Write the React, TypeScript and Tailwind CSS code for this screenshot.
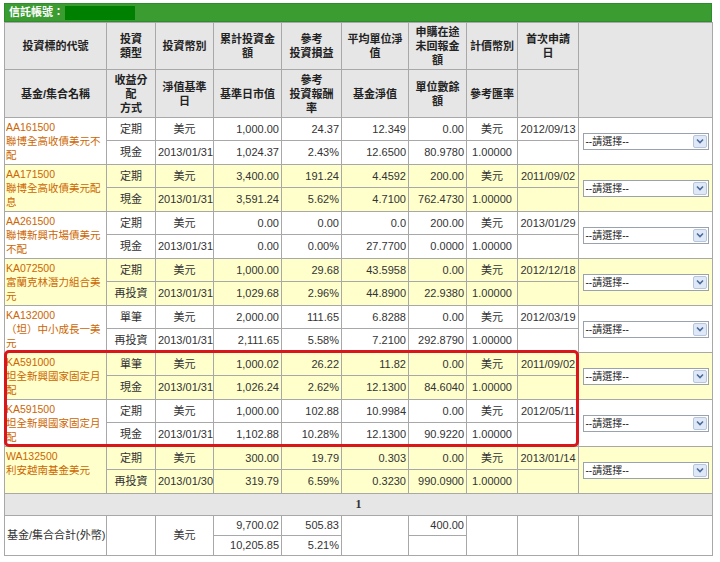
const funds = [
  { code: "AA161500", name: "聯博全高收債美元不配", y: false, a: ["定期", "美元", "1,000.00", "24.37", "12.349", "0.00", "美元", "2012/09/13"], b: ["現金", "2013/01/31", "1,024.37", "2.43%", "12.6500", "80.9780", "1.00000", ""] },
  { code: "AA171500", name: "聯博全高收債美元配息", y: true, a: ["定期", "美元", "3,400.00", "191.24", "4.4592", "200.00", "美元", "2011/09/02"], b: ["現金", "2013/01/31", "3,591.24", "5.62%", "4.7100", "762.4730", "1.00000", ""] },
  { code: "AA261500", name: "聯博新興市場債美元不配", y: false, a: ["定期", "美元", "0.00", "0.00", "0.0", "200.00", "美元", "2013/01/29"], b: ["現金", "2013/01/31", "0.00", "0.00%", "27.7700", "0.0000", "1.00000", ""] },
  { code: "KA072500", name: "富蘭克林潛力組合美元", y: true, a: ["定期", "美元", "1,000.00", "29.68", "43.5958", "0.00", "美元", "2012/12/18"], b: ["再投資", "2013/01/31", "1,029.68", "2.96%", "44.8900", "22.9380", "1.00000", ""] },
  { code: "KA132000", name: "（坦）中小成長一美元", y: false, a: ["單筆", "美元", "2,000.00", "111.65", "6.8288", "0.00", "美元", "2012/03/19"], b: ["再投資", "2013/01/31", "2,111.65", "5.58%", "7.2100", "292.8790", "1.00000", ""] },
  { code: "KA591000", name: "坦全新興國家固定月配", y: true, a: ["單筆", "美元", "1,000.02", "26.22", "11.82", "0.00", "美元", "2011/09/02"], b: ["現金", "2013/01/31", "1,026.24", "2.62%", "12.1300", "84.6040", "1.00000", ""] },
  { code: "KA591500", name: "坦全新興國家固定月配", y: false, a: ["定期", "美元", "1,000.00", "102.88", "10.9984", "0.00", "美元", "2012/05/11"], b: ["現金", "2013/01/31", "1,102.88", "10.28%", "12.1300", "90.9220", "1.00000", ""] },
  { code: "WA132500", name: "利安越南基金美元", y: true, a: ["定期", "美元", "300.00", "19.79", "0.303", "0.00", "美元", "2013/01/14"], b: ["再投資", "2013/01/30", "319.79", "6.59%", "0.3230", "990.0900", "1.00000", ""] },
];

// alignment per data column (after name column)
const align = ["text-center", "text-center", "text-right", "text-right", "text-right", "text-right", "text-center", "text-center"];
const widths = ["w-[102px]", "w-[49px]", "w-[58px]", "w-[68px]", "w-[60px]", "w-[67px]", "w-[58px]", "w-[51px]", "w-[61px]", "w-[134px]"];

const td = "border border-[#a8a8a8] px-[2px] py-0 leading-[13px] whitespace-nowrap";
const th = "border border-[#a8a8a8] px-[2px] font-bold text-[#222] bg-[#e6e6e6] leading-[14px] text-center";

function Select() {
  return (
    <div className="mx-auto flex h-[17px] w-[126px] items-center justify-between border border-[#9aa3ad] bg-white pl-[2px] text-[10px] text-[#222]">
      <span>--請選擇--</span>
      <span className="mr-[1px] flex h-[13px] w-[14px] items-center justify-center rounded-[2px] border border-[#b7c6dd] bg-[#dfe8f6]">
        <svg width="8" height="6" viewBox="0 0 8 6"><path d="M1 1.5 L4 4.5 L7 1.5" stroke="#4a6a9a" strokeWidth="1.6" fill="none" /></svg>
      </span>
    </div>
  );
}

export default function App() {
  return (
    <div className="bg-white p-[4px] pt-[3px] text-[11px] text-[#333]" style={{ fontFamily: '"Liberation Sans", "Noto Sans CJK TC", sans-serif' }}>
      <div className="relative w-[708px]">
        <div className="flex h-[19px] items-center border border-[#2e8b2e] bg-[#3a9c31] px-[4px] text-[11px] font-bold text-white">
          信託帳號：<span className="ml-[1px] inline-block h-[14px] w-[70px] bg-[#008000]" />
        </div>
        <table className="w-full table-fixed border-collapse">
          <colgroup>
            {widths.map((w, i) => <col key={i} className={w} />)}
          </colgroup>
          <tbody>
            <tr className="h-[47px]">
              <th className={th}>投資標的代號</th>
              <th className={th}>投資<br />類型</th>
              <th className={th}>投資幣別</th>
              <th className={th}>累計投資金<br />額</th>
              <th className={th}>參考<br />投資損益</th>
              <th className={th}>平均單位淨<br />值</th>
              <th className={th}>申購在途<br />未回報金<br />額</th>
              <th className={th}>計價幣別</th>
              <th className={th}>首次申請<br />日</th>
              <th className={th} rowSpan={2}></th>
            </tr>
            <tr className="h-[48px]">
              <th className={th}>基金/集合名稱</th>
              <th className={th}>收益分<br />配<br />方式</th>
              <th className={th}>淨值基準<br />日</th>
              <th className={th}>基準日市值</th>
              <th className={th}>參考<br />投資報酬<br />率</th>
              <th className={th}>基金淨值</th>
              <th className={th}>單位數餘<br />額</th>
              <th className={th}>參考匯率</th>
              <th className={th}></th>
            </tr>
            {funds.map((f) => {
              const bg = f.y ? "bg-[#ffffcc]" : "bg-white";
              return [
                <tr key={f.code + "a"} className={`h-[23px] ${bg}`}>
                  <td className="border border-[#a8a8a8] px-[1px] align-top text-[10.5px] text-[#cc6600]" rowSpan={2}>
                    <div className="h-[44px] overflow-hidden pt-[2px] leading-[14px]">{f.code}<br />{f.name}</div>
                  </td>
                  {f.a.map((v, i) => <td key={i} className={`${td} ${align[i]}`}>{v}</td>)}
                  <td className={td} rowSpan={2}><Select /></td>
                </tr>,
                <tr key={f.code + "b"} className={`h-[24px] ${bg}`}>
                  {f.b.map((v, i) => <td key={i} className={`${td} ${align[i]}`}>{v}</td>)}
                </tr>,
              ];
            })}
            <tr className="h-[22px] bg-[#e6e6e6]">
              <td colSpan={10} className={`${td} text-center font-bold text-[12px]`} style={{ fontFamily: '"Liberation Serif", serif' }}>1</td>
            </tr>
            <tr className="h-[20px]">
              <td className={`${td} text-center`} rowSpan={2}>基金/集合合計(外幣)</td>
              <td className={td} rowSpan={2}></td>
              <td className={`${td} text-center`} rowSpan={2}>美元</td>
              <td className={`${td} text-right`}>9,700.02</td>
              <td className={`${td} text-right`}>505.83</td>
              <td className={td} rowSpan={2}></td>
              <td className={`${td} text-right`}>400.00</td>
              <td className={td} rowSpan={2}></td>
              <td className={td} rowSpan={2}></td>
              <td className={td} rowSpan={2}></td>
            </tr>
            <tr className="h-[20px]">
              <td className={`${td} text-right`}>10,205.85</td>
              <td className={`${td} text-right`}>5.21%</td>
              <td className={td}></td>
            </tr>
          </tbody>
        </table>
        <div className="pointer-events-none absolute left-[0px] top-[347px] h-[97px] w-[575px] rounded-[5px] border-[3px] border-[#d8161b]" />
      </div>
    </div>
  );
}
